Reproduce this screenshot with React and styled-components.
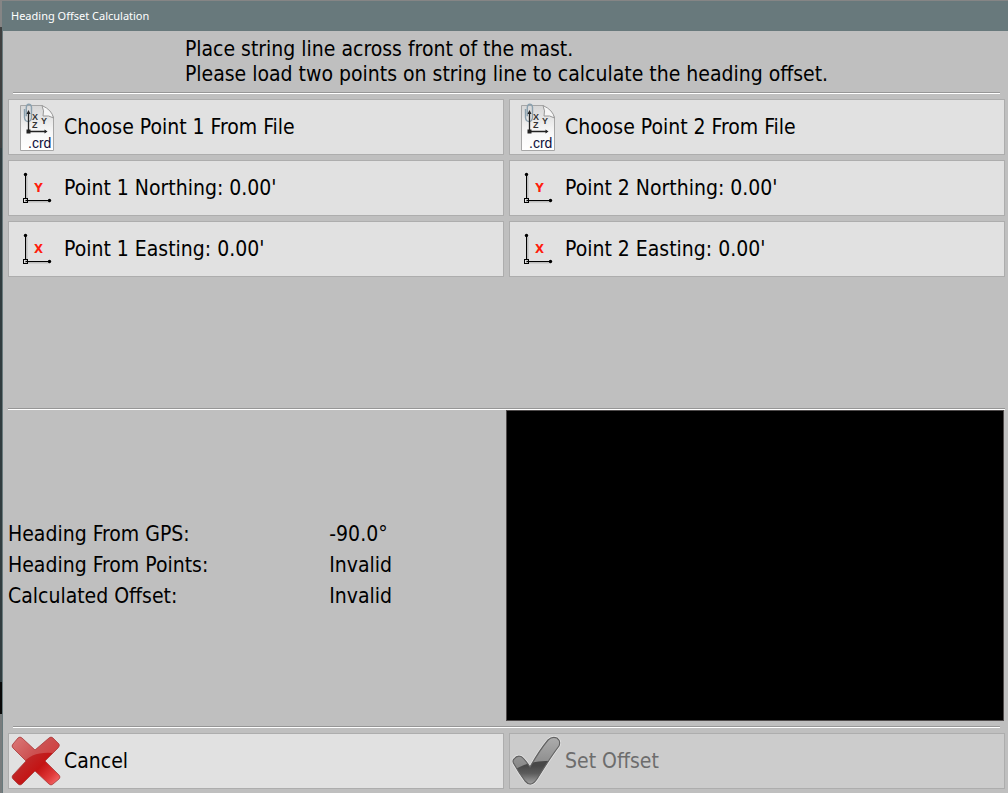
import React from "react";
import styled, { createGlobalStyle } from "styled-components";

const GlobalStyle = createGlobalStyle`
  * {
    box-sizing: border-box;
  }
  body {
    margin: 0;
    background: #bfbfbf;
    color: #000;
    font-family: "DejaVu Sans Condensed", Tahoma, "Noto Sans", sans-serif;
    font-size: 21px;
  }
`;

const Desktop = styled.div`
  min-height: 100vh;
  display: flex;
  padding: 1px 0 0 2px;
  background: linear-gradient(
    #858585 27px,
    #3f4040 27px 148px,
    #303c3f 148px 86%,
    #080808 86% 90%,
    #787c7d 90%
  );
`;

const Window = styled.div`
  flex: 1;
  display: flex;
  flex-direction: column;
  border-left: 1px solid #68797c;
  background: #bfbfbf;
`;

const TitleBar = styled.header`
  height: 30px;
  padding: 0 8px 2px;
  display: flex;
  align-items: center;
  background: #68797c;
  h1 {
    margin: 0;
    font-family: "Noto Sans", "Open Sans", sans-serif;
    font-size: 11px;
    font-weight: normal;
    color: #fff;
  }
`;

const Content = styled.main`
  flex: 1;
  display: flex;
  flex-direction: column;
  padding: 6px 3px 4px 5px;
`;

const Instructions = styled.p`
  margin: 0 auto;
  line-height: 25px;
`;

const Divider = styled.hr`
  width: auto;
  height: 2px;
  margin: ${(props) => (props.$wide ? "0" : "5px 5px")};
  border: 0;
  border-top: 1px solid #969696;
  background: #fff;
`;

const ButtonGrid = styled.div`
  display: grid;
  grid-template-columns: 1fr 1fr;
  gap: 5px;
`;

const PointGrid = styled(ButtonGrid)`
  padding-bottom: 131px;
`;

const ActionButton = styled.button`
  height: 56px;
  padding: 0 2px;
  display: flex;
  align-items: center;
  gap: 3px;
  border: 1px solid #adadad;
  background: #e1e1e1;
  color: #000;
  font: inherit;
  text-align: left;
  svg {
    flex: none;
    width: 50px;
    height: 50px;
  }
  &:disabled {
    background: #cccccc;
    color: #6d6d6d;
  }
`;

const Results = styled.section`
  flex: 1;
  display: grid;
  grid-template-columns: 1fr 1fr;
  padding-right: 1px;
`;

const Readings = styled.dl`
  margin: 0;
  display: grid;
  grid-template-columns: 20fr 11fr;
  align-content: center;
  line-height: 31px;
  dt,
  dd {
    margin: 0;
  }
`;

const Preview = styled.div`
  border: 1px solid #4f4b4b;
  background: #000;
`;

const FileIcon = () => (
  <svg viewBox="0 0 50 50" aria-hidden="true">
    <defs>
      <linearGradient id="paper" x1="0" y1="0" x2="0" y2="1">
        <stop offset="0" stopColor="#d6d6d6" />
        <stop offset="0.6" stopColor="#f8f8f8" />
        <stop offset="1" stopColor="#fff" />
      </linearGradient>
    </defs>
    <path d="M9.500 3.500H31L42.500 15V48.500H9.500z" fill="url(#paper)" stroke="#a6a6a6" />
    <path d="M31 3.500Q33.500 9 32 14Q38 13 42.500 16Q41 8 31 3.500z" fill="#f6f6f6" stroke="#999" />
    <path
      d="M13.500 7v8.500q.5 4 3.500 4t3.500 -4v-10.500q-.5 -2.800 -2.700 -2.800t-2.500 3v9"
      fill="none"
      stroke="#8ba1af"
      strokeWidth="1.400"
    />
    <path d="M17.500 29V10M17.500 29.500H35" fill="none" stroke="#222" strokeWidth="1.300" />
    <path d="M15.500 12l2 -4l2 4zM33.500 27.500l3 2l-3 2zM15.500 27.500h4v4h-4z" fill="#222" />
    <g fill="#333" fontFamily="Liberation Sans, sans-serif" fontWeight="bold" fontSize="9">
      <text x="21" y="18">X</text>
      <text x="21" y="26">Z</text>
      <text x="30" y="22">Y</text>
    </g>
    <text x="17" y="46" fill="#10103c" fontFamily="Liberation Sans, sans-serif" fontSize="14">
      .crd
    </text>
  </svg>
);

const AxisIcon = ({ axis }) => (
  <svg viewBox="0 0 50 50" aria-hidden="true">
    <path d="M15.500 38V13M14 38.500h25" fill="none" stroke="#888" strokeWidth="2" opacity="0.4" />
    <path d="M14.500 36V11M14.500 37.500H38" fill="none" stroke="#000" />
    <rect x="12.500" y="35.500" width="4" height="4" fill="none" stroke="#000" />
    <circle cx="14.500" cy="11.500" r="1.700" />
    <circle cx="38.500" cy="37.500" r="1.700" />
    <text
      x="27.500"
      y="29"
      textAnchor="middle"
      fill="#ff1c0c"
      fontFamily="DejaVu Sans Condensed, sans-serif"
      fontWeight="bold"
      fontSize="13"
    >
      {axis}
    </text>
  </svg>
);

const crossPath =
  "M11 2L24 14L38 2Q40 0 42 2L48 8Q49 10 47 12L34 25L48 39Q50 41 48 43L42 48Q40 50 38 48L24 35L11 48Q9 50 7 48L2 43Q0 41 2 39L15 25L2 12Q0 10 2 8L7 2Q9 0 11 2z";

const CancelIcon = () => (
  <svg viewBox="0 0 50 50" aria-hidden="true">
    <defs>
      <linearGradient id="red" x1="0" y1="0" x2="1" y2="1">
        <stop offset="0" stopColor="#d45c5c" />
        <stop offset="0.400" stopColor="#c02626" />
        <stop offset="0.600" stopColor="#c41414" />
        <stop offset="0.800" stopColor="#e03a3a" />
        <stop offset="1" stopColor="#ff8080" />
      </linearGradient>
      <clipPath id="cross">
        <path d={crossPath} />
      </clipPath>
    </defs>
    <g clipPath="url(#cross)">
      <path d="M0 0h50v50H0z" fill="url(#red)" />
      <path d="M0 0h50v18Q18 12 8 33L0 40z" fill="#fff" opacity="0.200" />
    </g>
    <path d={crossPath} fill="none" stroke="#a83a3a" strokeWidth="0.800" />
  </svg>
);

const checkPath =
  "M2 23Q5 19 9 20.500Q12 22 18 31Q27 15 36 4Q40 0 45 2Q49 5 47 10Q38 22 25 43Q19 52 13 45Q7 37 2 28Q0 25 2 23z";

const CheckIcon = () => (
  <svg viewBox="0 0 50 50" aria-hidden="true">
    <defs>
      <linearGradient id="grayTop" x1="0" y1="0" x2="0" y2="1">
        <stop offset="0" stopColor="#aeaeae" />
        <stop offset="0.600" stopColor="#8a8a8a" />
      </linearGradient>
      <linearGradient id="grayBottom" x1="0" y1="0" x2="0" y2="1">
        <stop offset="0.200" stopColor="#484848" />
        <stop offset="0.500" stopColor="#5c5c5c" />
        <stop offset="1" stopColor="#b0b0b0" />
      </linearGradient>
      <clipPath id="check">
        <path d={checkPath} />
      </clipPath>
    </defs>
    <path d={checkPath} fill="none" stroke="#e6e6e6" strokeWidth="2.600" />
    <g clipPath="url(#check)">
      <path d="M0 0h50v50H0z" fill="url(#grayTop)" />
      <path d="M0 36Q14 23 50 25V50H0z" fill="url(#grayBottom)" />
    </g>
    <path d={checkPath} fill="none" stroke="#626262" strokeWidth="1.200" />
  </svg>
);

const App = () => {
  return (
    <Desktop>
      <GlobalStyle />
      <Window>
        <TitleBar>
          <h1>Heading Offset Calculation</h1>
        </TitleBar>
        <Content>
          <Instructions>
            Place string line across front of the mast.
            <br />
            Please load two points on string line to calculate the heading offset.
          </Instructions>
          <Divider />
          <PointGrid>
            <ActionButton type="button">
              <FileIcon />
              Choose Point 1 From File
            </ActionButton>
            <ActionButton type="button">
              <FileIcon />
              Choose Point 2 From File
            </ActionButton>
            <ActionButton type="button">
              <AxisIcon axis="Y" />
              Point 1 Northing: 0.00'
            </ActionButton>
            <ActionButton type="button">
              <AxisIcon axis="Y" />
              Point 2 Northing: 0.00'
            </ActionButton>
            <ActionButton type="button">
              <AxisIcon axis="X" />
              Point 1 Easting: 0.00'
            </ActionButton>
            <ActionButton type="button">
              <AxisIcon axis="X" />
              Point 2 Easting: 0.00'
            </ActionButton>
          </PointGrid>
          <Divider $wide />
          <Results>
            <Readings>
              <dt>Heading From GPS:</dt>
              <dd>-90.0°</dd>
              <dt>Heading From Points:</dt>
              <dd>Invalid</dd>
              <dt>Calculated Offset:</dt>
              <dd>Invalid</dd>
            </Readings>
            <Preview />
          </Results>
          <Divider />
          <ButtonGrid>
            <ActionButton type="button">
              <CancelIcon />
              Cancel
            </ActionButton>
            <ActionButton type="button" disabled>
              <CheckIcon />
              Set Offset
            </ActionButton>
          </ButtonGrid>
        </Content>
      </Window>
    </Desktop>
  );
};

export default App;
